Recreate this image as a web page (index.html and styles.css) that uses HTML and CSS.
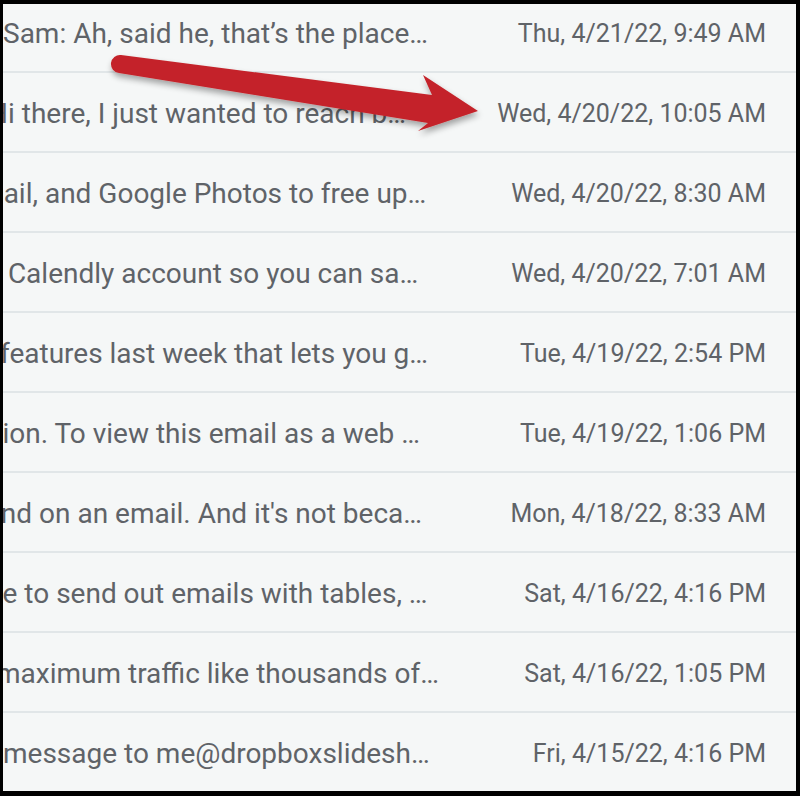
FILE: index.html
```html
<!DOCTYPE html>
<html>
<head>
<meta charset="utf-8">
<link rel="stylesheet" href="styles.css">
</head>
<body>
<div class="frame">
  <div class="list">
    <div class="row"><div class="snippet" style="text-indent:0px">Sam: Ah, said he, that’s the place…</div><div class="date">Thu, 4/21/22, 9:49 AM</div></div>
    <div class="row"><div class="snippet" style="text-indent:-15px">Hi there, I just wanted to reach b…</div><div class="date">Wed, 4/20/22, 10:05 AM</div></div>
    <div class="row"><div class="snippet" style="text-indent:-43px">Gmail, and Google Photos to free up…</div><div class="date">Wed, 4/20/22, 8:30 AM</div></div>
    <div class="row"><div class="snippet" style="text-indent:-56px">your Calendly account so you can sa…</div><div class="date">Wed, 4/20/22, 7:01 AM</div></div>
    <div class="row"><div class="snippet" style="text-indent:-3px">features last week that lets you g…</div><div class="date">Tue, 4/19/22, 2:54 PM</div></div>
    <div class="row"><div class="snippet" style="text-indent:-15px">sion. To view this email as a web …</div><div class="date">Tue, 4/19/22, 1:06 PM</div></div>
    <div class="row"><div class="snippet" style="text-indent:-17px">end on an email. And it's not beca…</div><div class="date">Mon, 4/18/22, 8:33 AM</div></div>
    <div class="row"><div class="snippet" style="text-indent:-23px">ble to send out emails with tables, …</div><div class="date">Sat, 4/16/22, 4:16 PM</div></div>
    <div class="row"><div class="snippet" style="text-indent:-7px">maximum traffic like thousands of…</div><div class="date">Sat, 4/16/22, 1:05 PM</div></div>
    <div class="row"><div class="snippet" style="text-indent:0px">message to me@dropboxslidesh…</div><div class="date">Fri, 4/15/22, 4:16 PM</div></div>
  </div>
  <svg class="arrow" width="800" height="796" viewBox="0 0 800 796">
    <defs>
      <filter id="sh" x="-10%" y="-30%" width="120%" height="160%">
        <feGaussianBlur in="SourceAlpha" stdDeviation="3"/>
        <feOffset dx="1" dy="4" result="b"/>
        <feComponentTransfer><feFuncA type="linear" slope="0.35"/></feComponentTransfer>
        <feMerge><feMergeNode/><feMergeNode in="SourceGraphic"/></feMerge>
      </filter>
    </defs>
    <g filter="url(#sh)" fill="#c4242a">
      <path d="M121 55 L432 95 L423 75 L478 111 L418 131 L428 123 L119 73 A9 9 0 0 1 121 55 Z"/>
    </g>
  </svg>
</div>
</body>
</html>
```

FILE: styles.css
```css
html, body {
  margin: 0;
  padding: 0;
}
body {
  width: 800px;
  height: 796px;
  overflow: hidden;
  font-family: Roboto, "Noto Sans", sans-serif;
}
.frame {
  position: relative;
  box-sizing: border-box;
  width: 800px;
  height: 796px;
  border-style: solid;
  border-color: #000;
  border-width: 4px 4px 5px 3px;
  background: #f5f7f7;
  overflow: hidden;
}
.list {
  margin-top: -11px;
}
.row {
  box-sizing: border-box;
  height: 80px;
  padding-top: 3px;
  display: flex;
  align-items: center;
  border-bottom: 2px solid #e1e6e8;
}
.snippet {
  flex: 0 0 460px;
  width: 460px;
  overflow: hidden;
  white-space: nowrap;
  font-size: 28px;
  color: #5f6368;
}
.date {
  margin-left: auto;
  padding-right: 30px;
  font-size: 25px;
  font-weight: 400;
  color: #5f6368;
  white-space: nowrap;
}
.arrow {
  position: absolute;
  left: -3px;
  top: -4px;
  pointer-events: none;
}
```
